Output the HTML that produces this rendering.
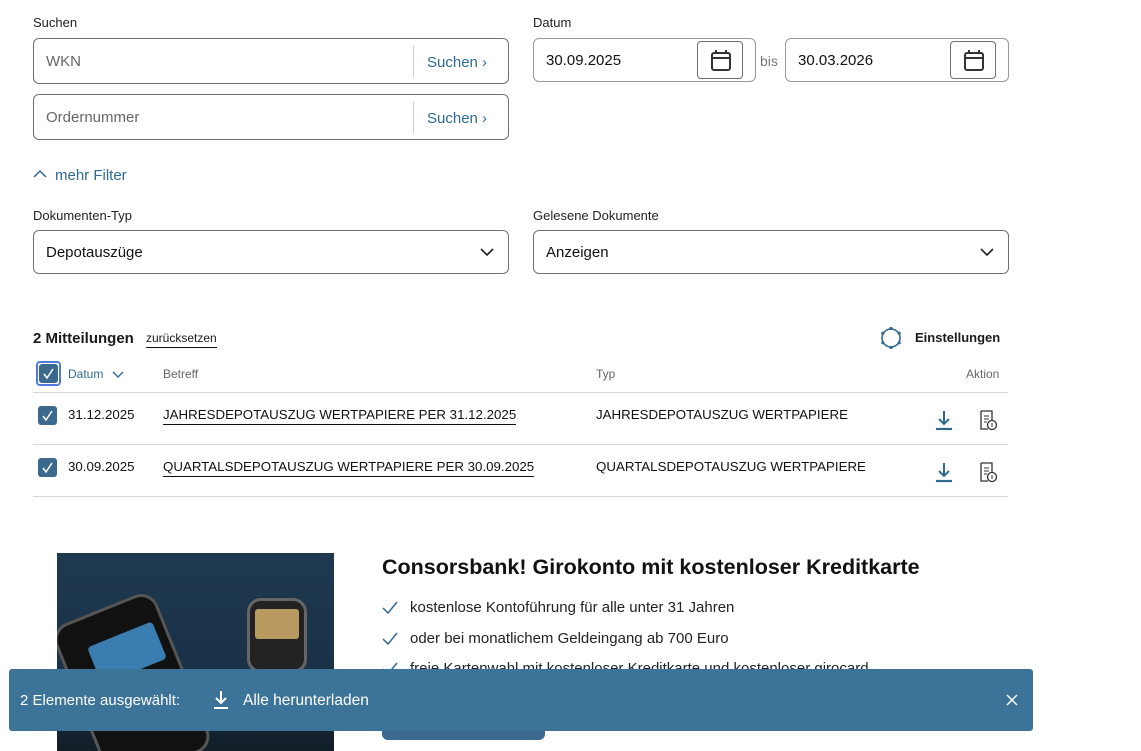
<!DOCTYPE html>
<html><head><meta charset="utf-8"><style>
*{box-sizing:border-box;margin:0;padding:0}
body{width:1141px;height:751px;overflow:hidden;background:#fff;font-family:"Liberation Sans",sans-serif;color:#1a1a1a;position:relative}
.abs{position:absolute}
.lbl{font-size:13px;color:#222}
.box{position:absolute;border:1px solid #707070;border-radius:6px;background:#fff}
.ph{position:absolute;left:12px;top:14px;font-size:15px;color:#666}
.sbtn{position:absolute;right:0;top:6px;bottom:6px;width:95px;border-left:1px solid #ccc;color:#2f6a93;font-size:15px;padding:9px 0 0 13px}
.val{position:absolute;left:12px;top:13px;font-size:15px;color:#111}
.cal{position:absolute;top:2px;width:46px;height:38px;border:1px solid #707070;border-radius:4px;background:#fff}
.cb{position:absolute;width:19px;height:19px;background:#3b6a8e;border-radius:3px}
.line{position:absolute;left:33px;width:975px;height:1px;background:#d6d6d6}
.th{font-size:12px;color:#666;top:367px}
.td{font-size:13.3px;color:#111}
.u{border-bottom:1.5px solid #111;padding-bottom:2px}
.li{position:absolute;left:382px;font-size:15px;color:#222}
.li svg{position:absolute;left:0;top:2px}
.li span{margin-left:28px}
</style></head><body>
<div class="abs lbl" style="left:33px;top:15px">Suchen</div>
<div class="box" style="left:33px;top:38px;width:476px;height:46px"><div class="ph">WKN</div><div class="sbtn">Suchen ›</div></div>
<div class="box" style="left:33px;top:94px;width:476px;height:46px"><div class="ph">Ordernummer</div><div class="sbtn">Suchen ›</div></div>
<div class="abs lbl" style="left:533px;top:15px">Datum</div>
<div class="box" style="left:533px;top:38px;width:223px;height:44px;border-color:#999"><div class="val">30.09.2025</div>
<div class="cal" style="left:163px"><svg width="46" height="38" viewBox="0 0 46 38"><rect x="14" y="11" width="18" height="17" rx="2" fill="none" stroke="#333" stroke-width="2"/><line x1="14" y1="16" x2="32" y2="16" stroke="#333" stroke-width="2"/><line x1="18" y1="8" x2="18" y2="12" stroke="#333" stroke-width="2"/><line x1="28" y1="8" x2="28" y2="12" stroke="#333" stroke-width="2"/></svg></div></div>
<div class="abs" style="left:760px;top:53px;font-size:14px;color:#777">bis</div>
<div class="box" style="left:785px;top:38px;width:224px;height:44px;border-color:#999"><div class="val">30.03.2026</div>
<div class="cal" style="left:164px"><svg width="46" height="38" viewBox="0 0 46 38"><rect x="14" y="11" width="18" height="17" rx="2" fill="none" stroke="#333" stroke-width="2"/><line x1="14" y1="16" x2="32" y2="16" stroke="#333" stroke-width="2"/><line x1="18" y1="8" x2="18" y2="12" stroke="#333" stroke-width="2"/><line x1="28" y1="8" x2="28" y2="12" stroke="#333" stroke-width="2"/></svg></div></div>

<svg class="abs" style="left:33px;top:169px" width="14" height="10"><polyline points="1,8 7,2 13,8" fill="none" stroke="#2f6a93" stroke-width="1.5"/></svg>
<div class="abs" style="left:55px;top:167px;font-size:15px;color:#2f6a93">mehr Filter</div>

<div class="abs lbl" style="left:33px;top:208px">Dokumenten-Typ</div>
<div class="box" style="left:33px;top:230px;width:476px;height:44px"><div class="val">Depotauszüge</div><svg class="abs" style="right:14px;top:16px" width="14" height="10"><polyline points="1,2 7,8 13,2" fill="none" stroke="#222" stroke-width="1.6"/></svg></div>
<div class="abs lbl" style="left:533px;top:208px">Gelesene Dokumente</div>
<div class="box" style="left:533px;top:230px;width:476px;height:44px"><div class="val">Anzeigen</div><svg class="abs" style="right:14px;top:16px" width="14" height="10"><polyline points="1,2 7,8 13,2" fill="none" stroke="#222" stroke-width="1.6"/></svg></div>

<div class="abs" style="left:33px;top:330px;font-size:15px;font-weight:bold">2 Mitteilungen</div>
<div class="abs u" style="left:146px;top:331px;font-size:12px">zurücksetzen</div>
<svg class="abs" style="left:879px;top:326px" width="24" height="24" viewBox="0 0 24 24"><circle cx="12" cy="12" r="9" fill="none" stroke="#2f6a93" stroke-width="1.6"/><g fill="#2f6a93"><circle cx="12" cy="2.5" r="1.6"/><circle cx="12" cy="21.5" r="1.6"/><circle cx="3.8" cy="7.2" r="1.6"/><circle cx="20.2" cy="7.2" r="1.6"/><circle cx="3.8" cy="16.8" r="1.6"/><circle cx="20.2" cy="16.8" r="1.6"/></g></svg>
<div class="abs" style="left:915px;top:330px;font-size:13px;font-weight:bold">Einstellungen</div>

<div class="abs" style="left:36px;top:361px;width:25px;height:25px;border:2px solid #4f7be0;border-radius:4px"></div>
<div class="cb" style="left:39px;top:364px"></div>
<svg class="abs" style="left:39px;top:364px" width="19" height="19"><polyline points="5,10 8,14 14,5" fill="none" stroke="#fff" stroke-width="1.5"/></svg>
<div class="abs th" style="left:68px;color:#2f6a93">Datum</div>
<svg class="abs" style="left:112px;top:371px" width="12" height="8"><polyline points="1,1 6,6 11,1" fill="none" stroke="#2f6a93" stroke-width="1.4"/></svg>
<div class="abs th" style="left:163px">Betreff</div>
<div class="abs th" style="left:596px">Typ</div>
<div class="abs th" style="left:966px">Aktion</div>
<div class="line" style="top:392px"></div>

<div class="cb" style="left:38px;top:406px"></div>
<svg class="abs" style="left:38px;top:406px" width="19" height="19"><polyline points="5,10 8,14 14,5" fill="none" stroke="#fff" stroke-width="1.5"/></svg>
<div class="abs td" style="left:68px;top:407px">31.12.2025</div>
<div class="abs td u" style="left:163px;top:407px">JAHRESDEPOTAUSZUG WERTPAPIERE PER 31.12.2025</div>
<div class="abs td" style="left:596px;top:407px">JAHRESDEPOTAUSZUG WERTPAPIERE</div>
<svg class="abs" style="left:934px;top:409px" width="20" height="22"><line x1="10" y1="2" x2="10" y2="15" stroke="#2f6a93" stroke-width="2"/><polyline points="5,10 10,15 15,10" fill="none" stroke="#2f6a93" stroke-width="2"/><line x1="2" y1="20" x2="18" y2="20" stroke="#2f6a93" stroke-width="2.2"/></svg>
<svg class="abs" style="left:978px;top:409px" width="22" height="22"><path d="M3 2h11v9M3 2v18h7" fill="none" stroke="#333" stroke-width="1.3"/><line x1="6" y1="7" x2="11" y2="7" stroke="#333"/><line x1="6" y1="10" x2="11" y2="10" stroke="#333"/><line x1="6" y1="13" x2="9" y2="13" stroke="#333"/><circle cx="14" cy="16" r="4.5" fill="#fff" stroke="#333" stroke-width="1.3"/><line x1="14" y1="14" x2="14" y2="18" stroke="#333"/></svg>
<div class="line" style="top:444px"></div>

<div class="cb" style="left:38px;top:458px"></div>
<svg class="abs" style="left:38px;top:458px" width="19" height="19"><polyline points="5,10 8,14 14,5" fill="none" stroke="#fff" stroke-width="1.5"/></svg>
<div class="abs td" style="left:68px;top:459px">30.09.2025</div>
<div class="abs td u" style="left:163px;top:459px">QUARTALSDEPOTAUSZUG WERTPAPIERE PER 30.09.2025</div>
<div class="abs td" style="left:596px;top:459px">QUARTALSDEPOTAUSZUG WERTPAPIERE</div>
<svg class="abs" style="left:934px;top:461px" width="20" height="22"><line x1="10" y1="2" x2="10" y2="15" stroke="#2f6a93" stroke-width="2"/><polyline points="5,10 10,15 15,10" fill="none" stroke="#2f6a93" stroke-width="2"/><line x1="2" y1="20" x2="18" y2="20" stroke="#2f6a93" stroke-width="2.2"/></svg>
<svg class="abs" style="left:978px;top:461px" width="22" height="22"><path d="M3 2h11v9M3 2v18h7" fill="none" stroke="#333" stroke-width="1.3"/><line x1="6" y1="7" x2="11" y2="7" stroke="#333"/><line x1="6" y1="10" x2="11" y2="10" stroke="#333"/><line x1="6" y1="13" x2="9" y2="13" stroke="#333"/><circle cx="14" cy="16" r="4.5" fill="#fff" stroke="#333" stroke-width="1.3"/><line x1="14" y1="14" x2="14" y2="18" stroke="#333"/></svg>
<div class="line" style="top:496px"></div>

<div class="abs" style="left:57px;top:553px;width:277px;height:198px;background:linear-gradient(180deg,#1e3950 0%,#1a3146 60%,#121d28 100%);overflow:hidden">
<div class="abs" style="left:20px;top:50px;width:110px;height:170px;background:#111;border:3px solid #555;border-radius:18px;transform:rotate(-22deg)"></div>
<div class="abs" style="left:35px;top:80px;width:70px;height:40px;background:#3a7db0;border-radius:4px;transform:rotate(-22deg)"></div>
<div class="abs" style="left:190px;top:45px;width:60px;height:75px;background:#222;border:3px solid #666;border-radius:14px"></div>
<div class="abs" style="left:198px;top:56px;width:44px;height:30px;background:#b89a60;border-radius:3px"></div>
</div>
<div class="abs" style="left:382px;top:555px;font-size:21.5px;font-weight:bold;color:#111">Consorsbank! Girokonto mit kostenloser Kreditkarte</div>
<div class="li" style="top:599px"><svg width="16" height="14"><polyline points="1,7 6,12 15,1" fill="none" stroke="#2f6a93" stroke-width="1.5"/></svg><span>kostenlose Kontoführung für alle unter 31 Jahren</span></div>
<div class="li" style="top:630px"><svg width="16" height="14"><polyline points="1,7 6,12 15,1" fill="none" stroke="#2f6a93" stroke-width="1.5"/></svg><span>oder bei monatlichem Geldeingang ab 700 Euro</span></div>
<div class="li" style="top:660px"><svg width="16" height="14"><polyline points="1,7 6,12 15,1" fill="none" stroke="#2f6a93" stroke-width="1.5"/></svg><span>freie Kartenwahl mit kostenloser Kreditkarte und kostenloser girocard</span></div>
<div class="abs" style="left:382px;top:705px;width:163px;height:35px;background:#3b6a8e;border-radius:6px"></div>

<div class="abs" style="left:9px;top:669px;width:1024px;height:62px;background:#3c7398;border-radius:3px;color:#fff">
<div class="abs" style="left:11px;top:23px;font-size:15px">2 Elemente ausgewählt:</div>
<svg class="abs" style="left:203px;top:21px" width="18" height="20"><line x1="9" y1="1" x2="9" y2="13" stroke="#fff" stroke-width="2"/><polyline points="4,8 9,13 14,8" fill="none" stroke="#fff" stroke-width="2"/><line x1="2" y1="18" x2="16" y2="18" stroke="#fff" stroke-width="2"/></svg>
<div class="abs" style="left:234px;top:23px;font-size:15.5px">Alle herunterladen</div>
<svg class="abs" style="left:997px;top:25px" width="12" height="12"><path d="M1 1L11 11M11 1L1 11" stroke="#fff" stroke-width="1.5"/></svg>
</div>
</body></html>
